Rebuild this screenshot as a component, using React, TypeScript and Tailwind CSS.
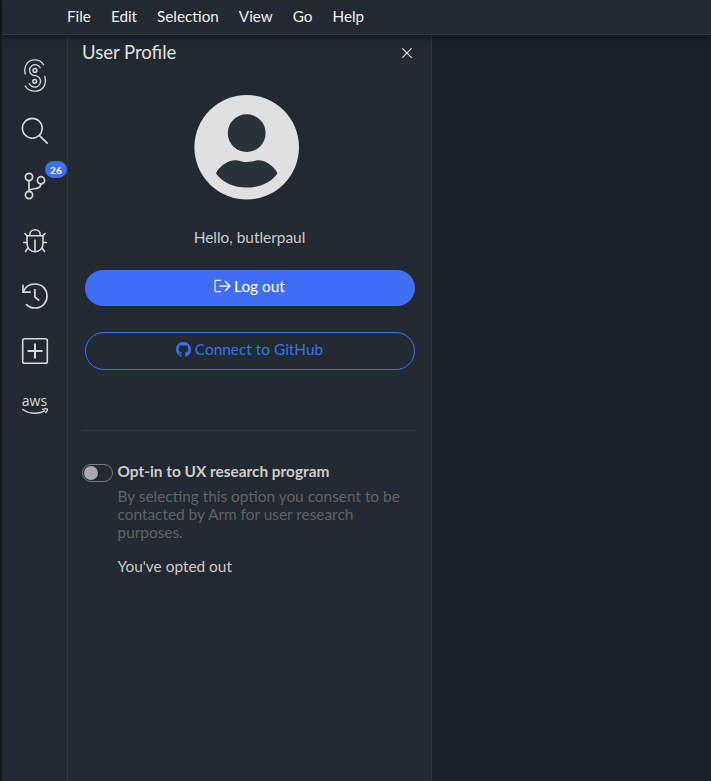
import React from "react";

const menus = ["File", "Edit", "Selection", "View", "Go", "Help"];

const stroke = {
  fill: "none",
  stroke: "currentColor",
  strokeLinecap: "round" as const,
  strokeLinejoin: "round" as const,
};

function StudioLogo() {
  return (
    <svg width="26" height="36" viewBox="0 0 26 36" {...stroke} strokeWidth="1.3">
      <path d="M3.2 16C1.6 9.5 4.7 2.4 11.8 1.9C16 1.6 19.6 3.4 21.4 6.6" />
      <path d="M22.8 18.3C24.9 26.5 21.1 32.8 13.8 33.2C8.8 33.4 5.2 31.4 3.2 28" />
      <path d="M18.2 9.7C16.8 6.7 12.5 5.6 9.8 7.7C6.7 10.1 6.9 14.6 9.6 16.6C11.8 18.2 15 17.2 17.1 19.4C19.6 22.4 18.6 27.1 15.2 28.6C12 29.9 8.6 28.4 7.2 25.5" />
      <circle cx="13" cy="12.4" r="1.9" strokeWidth="1.5" />
      <circle cx="12.7" cy="23.3" r="1.9" strokeWidth="1.5" />
    </svg>
  );
}

function SearchIcon() {
  return (
    <svg width="28" height="28" viewBox="0 0 28 28" {...stroke} strokeWidth="1.6">
      <circle cx="11.3" cy="11.3" r="9.9" />
      <path d="M18.5 18.7L26.2 26.1" strokeWidth="1.8" />
    </svg>
  );
}

function BranchIcon() {
  return (
    <svg width="28" height="28" viewBox="0 0 28 28" {...stroke} strokeWidth="1.7">
      <circle cx="8" cy="5" r="3.6" />
      <circle cx="8" cy="23" r="3.6" />
      <circle cx="20" cy="8.3" r="3.6" />
      <path d="M8 8.6V19.4M8 18.2C12 15.6 19.3 18.2 20 11.9" />
    </svg>
  );
}

function BugIcon() {
  return (
    <svg width="28" height="28" viewBox="0 0 28 28" {...stroke} strokeWidth="1.6">
      <path d="M6 8.7H22V16.5C22 21.5 18.5 24.7 14 24.7S6 21.5 6 16.5Z" />
      <path d="M8.8 8.5V7.7C8.8 4.8 11 2.7 14 2.7S19.2 4.8 19.2 7.7V8.5" />
      <path d="M14 13V24.5M2.7 15.5H6M22 15.5H25.3M3.9 6.5L6.2 8.9M24.1 6.5L21.8 8.9M7 21L4.5 24.5M21 21L23.5 24.5" />
    </svg>
  );
}

function HistoryIcon() {
  return (
    <svg width="28" height="28" viewBox="0 0 28 28" {...stroke} strokeWidth="1.7">
      <path d="M2 2.8V10.1H9.8" strokeLinecap="butt" strokeLinejoin="miter" />
      <path d="M2.4 9.8C4.3 5 9 2 14.1 2C20.9 2 26 7.2 26 14S20.9 26 14.1 26C10.8 26 7.7 24.9 5.5 22.6" />
      <path d="M13.9 7V15L18.3 18.7" strokeLinecap="butt" />
    </svg>
  );
}

function PlusBoxIcon() {
  return (
    <svg width="28" height="28" viewBox="0 0 28 28" {...stroke} strokeWidth="1.6">
      <rect x="1.7" y="1.7" width="24.6" height="24.6" rx="1.8" />
      <path d="M14 6.5V21.5M6.5 14H21.5" strokeLinecap="butt" strokeWidth="2" />
    </svg>
  );
}

function AwsIcon() {
  return (
    <span className="flex h-[25px] w-[28px] flex-col items-center font-['Open_Sans',sans-serif] text-[14px] leading-[16px] font-medium">
      <span className="h-[15px]">aws</span>
      <svg width="28" height="7" viewBox="0 13 28 7" {...stroke} strokeWidth="1.4">
        <path d="M1.6 14.5C8.5 19.3 17.5 19.3 23.8 15.8" />
        <path d="M21.8 14.4C24 13.6 25.6 13.5 26.2 14.1C26.6 14.8 26 16.3 24.8 17.5" />
      </svg>
    </span>
  );
}

function Avatar() {
  return (
    <svg width="106" height="106" viewBox="0 0 106 106">
      <circle cx="52.7" cy="53.3" r="52.3" fill="#e0e0e0" />
      <g fill="#293238">
        <circle cx="52.7" cy="39.1" r="18.9" />
        <path d="M21.9 79.2C26.7 70.5 35.2 66.3 41.2 66.3C44.7 66.3 47 68 52.7 68S60.7 66.3 64.4 66.3C70.4 66.3 78.7 70.5 83.6 79.2C76.7 89 65.5 93.5 52.7 93.5S28.7 89 21.9 79.2Z" />
      </g>
    </svg>
  );
}

function LogoutIcon() {
  return (
    <svg width="17" height="14" viewBox="0 0 17 14" {...stroke} strokeWidth="1.1">
      <path d="M6.5 1.4H1.9Q1 1.4 1 2.3V11.7Q1 12.6 1.9 12.6H6.5" />
      <path d="M5.8 7H16M11.3 2.2L16 7L11.3 11.8" strokeWidth="1.25" />
    </svg>
  );
}

function GithubIcon() {
  return (
    <svg width="15" height="15" viewBox="0 0 16 16" fill="currentColor">
      <path d="M8 0C3.58 0 0 3.58 0 8c0 3.54 2.29 6.53 5.47 7.59.4.07.55-.17.55-.38 0-.19-.01-.82-.01-1.49-2.01.37-2.53-.49-2.69-.94-.09-.23-.48-.94-.82-1.13-.28-.15-.68-.52-.01-.53.63-.01 1.08.58 1.23.82.72 1.21 1.87.87 2.33.66.07-.52.28-.87.51-1.07-1.78-.2-3.64-.89-3.64-3.95 0-.87.31-1.59.82-2.15-.08-.2-.36-1.02.08-2.12 0 0 .67-.21 2.2.82A7.6 7.6 0 0 1 8 3.86c.68 0 1.36.09 2 .27 1.53-1.04 2.2-.82 2.2-.82.44 1.1.16 1.92.08 2.12.51.56.82 1.27.82 2.15 0 3.07-1.87 3.75-3.65 3.95.29.25.54.73.54 1.48 0 1.07-.01 1.93-.01 2.2 0 .21.15.46.55.38A8.01 8.01 0 0 0 16 8c0-4.42-3.58-8-8-8z" />
    </svg>
  );
}

const tools = [StudioLogo, SearchIcon, BranchIcon, BugIcon, HistoryIcon, PlusBoxIcon, AwsIcon];

export default function App() {
  return (
    <div className="flex h-[781px] w-[711px] overflow-hidden bg-[#191919] pl-[2px] font-[Lato,sans-serif] text-[15.4px] leading-[18px] text-[#e0e0e0]">
      <div className="flex min-w-0 flex-1 flex-col bg-[#222930]">
        <header className="z-10 flex h-[35px] shrink-0 items-center gap-5 border-b border-[#30373e] bg-[#222930] pb-[2px] pl-[65px] text-[15.25px] text-[#f0f0f0] shadow-[0_2px_7px_rgba(0,0,0,0.5)]">
          {menus.map((m) => (
            <span key={m}>{m}</span>
          ))}
        </header>
        <div className="flex min-h-0 flex-1">
          <nav className="flex w-[66px] shrink-0 flex-col items-center border-r border-[#30373e] pt-[13px]">
            {tools.map((Icon, i) => (
              <button key={i} className="relative flex h-[55px] w-full items-center justify-center text-[#d8d8d8]">
                <Icon />
                {i === 2 && (
                  <span className="absolute top-[3px] right-0 flex h-[17px] w-[22px] items-center justify-center rounded-full bg-[#3e6df6] text-[10px] font-bold tracking-[0.2px] text-white">
                    26
                  </span>
                )}
              </button>
            ))}
          </nav>
          <aside className="flex w-[364px] shrink-0 flex-col border-r border-[#30373e] pr-[15px] pl-[14px]">
            <div className="flex h-[36px] items-center justify-between">
              <h1 className="pb-[2px] text-[18.5px] leading-[22px]">User Profile</h1>
              <svg width="18" height="18" viewBox="0 0 18 18" {...stroke} strokeWidth="1.2">
                <path d="M4.7 4.7L13.3 13.3M13.3 4.7L4.7 13.3" />
              </svg>
            </div>
            <div className="flex flex-col items-center pt-[23px] pr-[5px]">
              <Avatar />
              <p className="mt-[28px] pl-[6px] text-[#cccccc]">Hello, butlerpaul</p>
            </div>
            <button className="mt-[24px] ml-[3px] flex h-[36px] w-[330px] items-center justify-center gap-[3px] rounded-full bg-[#3e6df6] pr-px pb-[4px] text-white">
              <LogoutIcon />
              Log out
            </button>
            <button className="mt-[26px] ml-[3px] flex h-[38px] w-[330px] items-center justify-center gap-1 rounded-full border border-[#3e6df6] pr-px pb-[4px] text-[#3e6df6]">
              <GithubIcon />
              Connect to GitHub
            </button>
            <hr className="mt-[60px] border-[#30373e]" />
            <div className="mt-[31px] flex gap-[5px]">
              <span className="mt-[2px] flex h-[18px] w-[31px] shrink-0 items-center rounded-full border border-[#777b7f] pl-px">
                <span className="h-[14px] w-[14px] rounded-full bg-[#a9a9ad]" />
              </span>
              <div className="-ml-[0.5px]">
                <p className="font-bold text-[#cccccc]">Opt-in to UX research program</p>
                <p className="mt-[7px] w-[290px] text-[#616365]">
                  By selecting this option you consent to be contacted by Arm for user research purposes.
                </p>
                <p className="mt-4 text-[#cccccc]">You've opted out</p>
              </div>
            </div>
          </aside>
          <main className="flex-1 bg-[#1c2028]" />
        </div>
      </div>
    </div>
  );
}
